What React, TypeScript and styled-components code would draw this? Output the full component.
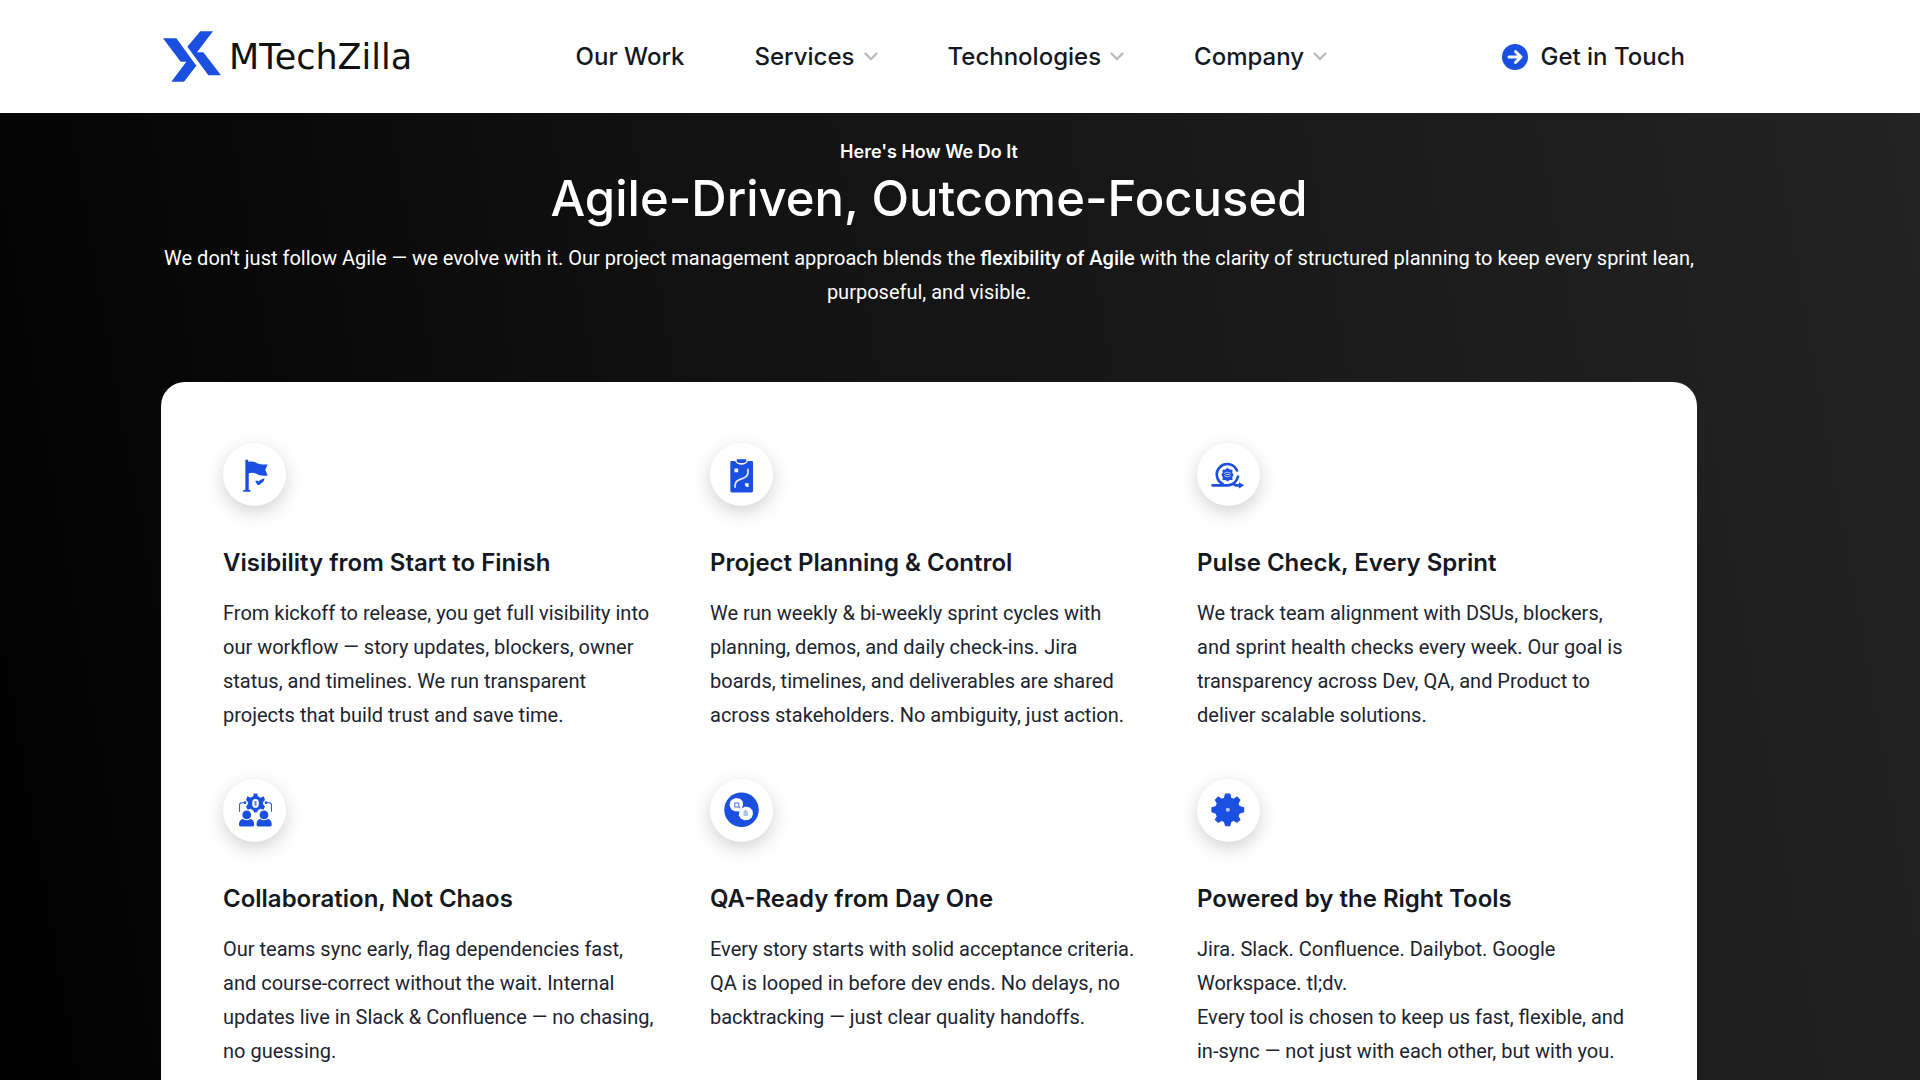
import React from "react";
import styled, { createGlobalStyle } from "styled-components";

const BLUE = "#1a4fe0";
const HEADING_FONT = `Inter, "Liberation Sans", sans-serif`;
const BODY_FONT = `Roboto, "Liberation Sans", sans-serif`;

const GlobalStyle = createGlobalStyle`
  *, *::before, *::after { box-sizing: border-box; }
  body { margin: 0; background: #fff; color: #14181f; font-family: ${BODY_FONT}; }
  h1, h2, h3, p, ul { margin: 0; padding: 0; }
`;

const Header = styled.header`
  background: #fff;
  padding: 0 72px 0 0;
`;

const HeaderInner = styled.div`
  display: flex;
  align-items: center;
  justify-content: space-between;
  max-width: 1522px;
  height: 113px;
  margin: 0 auto;
`;

const Brand = styled.a`
  display: flex;
  align-items: center;
  gap: 8px;
  color: #111;
  font: 400 35px/52px "DejaVu Sans", sans-serif;
  text-decoration: none;
`;

const Nav = styled.nav`
  display: flex;
  align-items: center;
  gap: 70px;
  margin-right: 12px;
`;

const navText = `
  display: flex;
  align-items: center;
  color: #14181f;
  font: 500 24px/32px ${HEADING_FONT};
  text-decoration: none;
`;

const NavLink = styled.a`
  ${navText}
`;

const NavButton = styled.button`
  ${navText}
  gap: 9px;
  padding: 0;
  border: 0;
  background: none;
  cursor: pointer;
`;

const ContactLink = styled.a`
  ${navText}
  gap: 12px;
`;

const Section = styled.section`
  padding: 24px 62px 80px 0;
  background: linear-gradient(80deg, #000 0%, #121212 42%, #232323 100%);
`;

const Container = styled.div`
  max-width: 1536px;
  margin: 0 auto;
`;

const Intro = styled.div`
  color: #fff;
  text-align: center;
`;

const Eyebrow = styled.p`
  font: 600 18px/30px ${HEADING_FONT};
`;

const Title = styled.h2`
  font: 500 49px/64px ${HEADING_FONT};
`;

const Lead = styled.p`
  margin-top: 10px;
  font: 400 20px/34px ${BODY_FONT};

  strong { font-weight: 500; }
`;

const Card = styled.ul`
  display: grid;
  grid-template-columns: repeat(3, minmax(0, 1fr));
  gap: 47px 49px;
  margin-top: 73px;
  padding: 61px 62px;
  border-radius: 24px;
  background: #fff;
  list-style: none;
`;

const IconDisc = styled.div`
  width: 63px;
  height: 63px;
  border-radius: 50%;
  background: #fff;
  box-shadow: 0 6px 18px rgba(0, 0, 0, 0.18);

  svg { display: block; width: 63px; height: 63px; }
`;

const FeatureTitle = styled.h3`
  margin-top: 39px;
  font: 600 24px/36px ${HEADING_FONT};
`;

const FeatureText = styled.p`
  margin-top: 15px;
  color: #1c2430;
  font: 400 20px/34px ${BODY_FONT};
  white-space: pre-line;
`;

const LogoMark = () => (
  <svg width="58" height="51" viewBox="70 63 174 152" fill={BLUE} aria-hidden="true">
    <path d="M70 84H110L170 167L133 215H95L140 155H123Z" />
    <path d="M182 63H220L172 126H191L244 195H206L143 110Z" />
  </svg>
);

const Chevron = () => (
  <svg width="14" height="10" viewBox="0 0 14 10" fill="none" stroke="#b9bcc0" strokeWidth="2.4" aria-hidden="true">
    <path d="M1.5 1.5L7 7L12.5 1.5" strokeLinecap="round" />
  </svg>
);

const ArrowDisc = () => (
  <svg width="26" height="26" viewBox="0 0 26 26" fill="none" stroke="#fff" strokeWidth="3" strokeLinecap="round" strokeLinejoin="round" aria-hidden="true">
    <circle cx="13" cy="13" r="13" fill={BLUE} stroke="none" />
    <path d="M7 13H18.5M13.5 7.5L19 13L13.5 18.5" />
  </svg>
);

const FlagIcon = () => (
  <svg viewBox="70 40 186 186" fill={BLUE} aria-hidden="true">
    <path d="M136 91Q140 87 145 91V96C152 93 160 95 166 97C172 101 180 105 202 103L195 119L202 136C188 138 176 136 168 131C160 127 152 127 146 130V179H151V184H130V179H136Z" />
    <path d="M165 152L171 151L175 154C180 149 186 145 193 145L190 153L177 164H172Z" />
  </svg>
);

const ClipboardIcon = () => (
  <svg viewBox="60 40 186 186" aria-hidden="true">
    <path fill={BLUE} d="M123 93H134Q140 104 153 104Q166 104 172 93H184Q187 93 187 97V181Q187 186 182 186H125Q120 186 120 181V97Q120 93 123 93Z" />
    <path fill={BLUE} d="M139 88H167V94Q165 99 159 99H147Q141 99 139 94Z" />
    <path fill="none" stroke="#e6ebfd" strokeWidth="5" strokeLinecap="round" d="M172 118V128C172 140 162 143 153 146C142 149 134 154 134 166V170" />
    <path fill="#eef2ff" d="M132 115H143V126H132ZM163 159H174V170H168L163 165Z" />
  </svg>
);

const SprintIcon = () => (
  <svg viewBox="81 40 186 186" fill="none" stroke={BLUE} strokeLinecap="round" aria-hidden="true">
    <path strokeWidth="8" d="M127 165H172C188 164 199 153 202 139" />
    <path strokeWidth="8" d="M199 121A31 31 0 1 0 157 161" />
    <path strokeWidth="8" d="M188 161L196 165H207" />
    <path fill={BLUE} stroke="none" d="M205 156L220 165L205 174Z" />
    <path fill={BLUE} stroke="none" d="M171 113L177 118L186 119L185 128L189 134L185 141L186 149L177 149L171 154L165 149L156 149L157 141L153 134L157 128L156 119L165 118Z" />
    <path stroke="#fff" strokeWidth="2" d="M162 129Q171 122 180 129M162 137Q171 145 180 137M167 133H176" />
  </svg>
);

const TeamIcon = () => (
  <svg viewBox="70 46 186 186" fill={BLUE} aria-hidden="true">
    <path fillRule="evenodd" d="M161 89H171L173 97L181 101L190 97L194 108L188 115V120L194 127L189 137L180 134L173 138L170 145H162L159 138L151 134L143 137L138 127L144 120V115L138 108L142 97L151 101L159 97ZM166 105A10 13 0 1 0 166 131A10 13 0 1 0 166 105Z" />
    <path d="M163 111H169V125H163Z" opacity=".7" />
    <path fill="none" stroke={BLUE} strokeWidth="3" d="M119 143V122Q119 116 125 116H136M213 143V122Q213 116 207 116H197" />
    <circle cx="135" cy="116" r="4" />
    <circle cx="197" cy="116" r="4" />
    <circle cx="140" cy="152" r="13" />
    <circle cx="191" cy="152" r="13" />
    <path d="M117 181Q117 166 129 164Q140 171 151 164Q162 166 162 181Q162 186 157 186H122Q117 186 117 181ZM169 181Q169 166 180 164Q191 171 202 164Q214 166 214 181Q214 186 209 186H174Q169 186 169 181Z" />
  </svg>
);

const QualityIcon = () => (
  <svg viewBox="60 46 186 186" aria-hidden="true">
    <circle cx="153" cy="137" r="51" fill={BLUE} />
    <path fill="#fff" d="M137 102L149 104L156 112L158 123L153 134L146 142L133 141L123 136L118 125L120 112L128 105Z" />
    <path fill="#fff" d="M165 127L177 130L185 138L187 149L183 160L175 166L163 168L151 163L145 153L147 140L154 132Z" />
    <path fill="none" stroke={BLUE} strokeWidth="3" opacity=".8" d="M133 117H145V129H133ZM143 127L148 132" />
    <path fill={BLUE} opacity=".35" d="M159 141L165 136L172 142V155H159Z" />
  </svg>
);

const GearIcon = () => (
  <svg viewBox="81 46 186 186" aria-hidden="true">
    <path
      fill={BLUE}
      stroke={BLUE}
      strokeWidth="3"
      strokeLinejoin="round"
      d="M165 90H178L181 103L189 106L199 99L208 108L202 118L206 127L219 131V143L206 147L202 156L208 166L199 174L189 168L181 172L178 184H165L162 172L154 168L144 174L135 166L141 156L137 147L125 143V131L137 127L141 118L135 108L144 99L154 106L162 103Z"
    />
    <circle cx="172" cy="137" r="6" fill="#b9c9fa" />
  </svg>
);

const FEATURES = [
  {
    title: "Visibility from Start to Finish",
    text: "From kickoff to release, you get full visibility into our workflow — story updates, blockers, owner status, and timelines. We run transparent projects that build trust and save time.",
    Icon: FlagIcon,
  },
  {
    title: "Project Planning & Control",
    text: "We run weekly & bi-weekly sprint cycles with planning, demos, and daily check-ins. Jira boards, timelines, and deliverables are shared across stakeholders. No ambiguity, just action.",
    Icon: ClipboardIcon,
  },
  {
    title: "Pulse Check, Every Sprint",
    text: "We track team alignment with DSUs, blockers, and sprint health checks every week. Our goal is transparency across Dev, QA, and Product to deliver scalable solutions.",
    Icon: SprintIcon,
  },
  {
    title: "Collaboration, Not Chaos",
    text: "Our teams sync early, flag dependencies fast, and course-correct without the wait. Internal updates live in Slack & Confluence — no chasing, no guessing.",
    Icon: TeamIcon,
  },
  {
    title: "QA-Ready from Day One",
    text: "Every story starts with solid acceptance criteria. QA is looped in before dev ends. No delays, no backtracking — just clear quality handoffs.",
    Icon: QualityIcon,
  },
  {
    title: "Powered by the Right Tools",
    text: "Jira. Slack. Confluence. Dailybot. Google Workspace. tl;dv.\nEvery tool is chosen to keep us fast, flexible, and in-sync — not just with each other, but with you.",
    Icon: GearIcon,
  },
];

const MENUS = ["Services", "Technologies", "Company"];

export default function App() {
  return (
    <>
      <GlobalStyle />
      <Header>
        <HeaderInner>
          <Brand href="#home">
            <LogoMark />
            MTechZilla
          </Brand>
          <Nav aria-label="Main">
            <NavLink href="#work">Our Work</NavLink>
            {MENUS.map((menu) => (
              <NavButton key={menu} type="button" aria-haspopup="true">
                {menu}
                <Chevron />
              </NavButton>
            ))}
          </Nav>
          <ContactLink href="#contact">
            <ArrowDisc />
            Get in Touch
          </ContactLink>
        </HeaderInner>
      </Header>
      <Section>
        <Container>
          <Intro>
            <Eyebrow>Here's How We Do It</Eyebrow>
            <Title>Agile-Driven, Outcome-Focused</Title>
            <Lead>
              We don't just follow Agile — we evolve with it. Our project management approach blends the{" "}
              <strong>flexibility of Agile</strong> with the clarity of structured planning to keep every sprint lean,
              purposeful, and visible.
            </Lead>
          </Intro>
          <Card>
            {FEATURES.map(({ title, text, Icon }) => (
              <li key={title}>
                <IconDisc>
                  <Icon />
                </IconDisc>
                <FeatureTitle>{title}</FeatureTitle>
                <FeatureText>{text}</FeatureText>
              </li>
            ))}
          </Card>
        </Container>
      </Section>
    </>
  );
}
